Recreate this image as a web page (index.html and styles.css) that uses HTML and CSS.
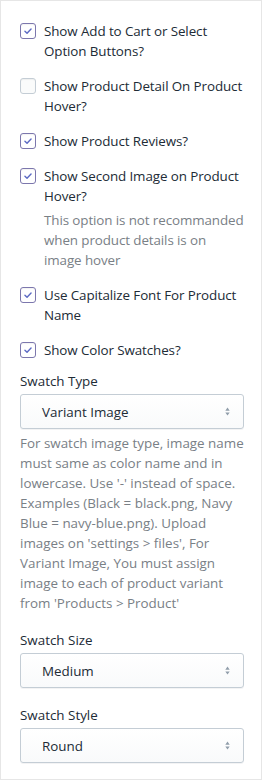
FILE: index.html
```html
<!DOCTYPE html>
<html lang="en">

<head>
  <meta charset="UTF-8">
  <meta name="viewport" content="width=device-width, initial-scale=1.0">
  <title>Product settings</title>
  <link rel="stylesheet" href="styles.css">
</head>

<body>

  <div class="panel">

    <label class="check">
      <span class="box checked"><svg viewBox="0 0 16 16"><path d="M4.5 8.2l2.4 2.4 4.6-4.8"/></svg></span>
      <span class="check-text">Show Add to Cart or Select Option Buttons?</span>
    </label>

    <label class="check">
      <span class="box"></span>
      <span class="check-text">Show Product Detail On Product Hover?</span>
    </label>

    <label class="check">
      <span class="box checked"><svg viewBox="0 0 16 16"><path d="M4.5 8.2l2.4 2.4 4.6-4.8"/></svg></span>
      <span class="check-text">Show Product Reviews?</span>
    </label>

    <label class="check">
      <span class="box checked"><svg viewBox="0 0 16 16"><path d="M4.5 8.2l2.4 2.4 4.6-4.8"/></svg></span>
      <span class="check-text">Show Second Image on Product Hover?
        <span class="help">This option is not recommanded when product details is on image hover</span>
      </span>
    </label>

    <label class="check">
      <span class="box checked"><svg viewBox="0 0 16 16"><path d="M4.5 8.2l2.4 2.4 4.6-4.8"/></svg></span>
      <span class="check-text">Use Capitalize Font For Product Name</span>
    </label>

    <label class="check">
      <span class="box checked"><svg viewBox="0 0 16 16"><path d="M4.5 8.2l2.4 2.4 4.6-4.8"/></svg></span>
      <span class="check-text">Show Color Swatches?</span>
    </label>

    <div class="field first">
      <div class="field-label">Swatch Type</div>
      <div class="select">
        <span>Variant Image</span>
        <svg class="arrows" viewBox="0 0 8 12"><path d="M4 1.5L6.5 5h-5zM4 10.5L1.5 7h5z"/></svg>
      </div>
      <p class="help">For swatch image type, image name must same as color name and in lowercase. Use '-' instead of space. Examples (Black = black.png, Navy Blue = navy-blue.png). Upload images on 'settings &gt; files', For Variant Image, You must assign image to each of product variant from 'Products &gt; Product'</p>
    </div>

    <div class="field">
      <div class="field-label">Swatch Size</div>
      <div class="select">
        <span>Medium</span>
        <svg class="arrows" viewBox="0 0 8 12"><path d="M4 1.5L6.5 5h-5zM4 10.5L1.5 7h5z"/></svg>
      </div>
    </div>

    <div class="field">
      <div class="field-label">Swatch Style</div>
      <div class="select">
        <span>Round</span>
        <svg class="arrows" viewBox="0 0 8 12"><path d="M4 1.5L6.5 5h-5zM4 10.5L1.5 7h5z"/></svg>
      </div>
    </div>

  </div>

</body>

</html>
```

FILE: styles.css
```css
body {
  margin: 0;
  background-color: #ffffff;
  font-family: "Open Sans", "Noto Sans", sans-serif;
  font-size: 13.4px;
  line-height: 20px;
  color: #212b36;
}

.panel {
  box-sizing: border-box;
  width: 262px;
  height: 780px;
  border: 1px solid #e6e6e6;
  padding: 20px 16px 0 19px;
  display: flex;
  flex-direction: column;
}

.check {
  display: flex;
  align-items: flex-start;
  gap: 8px;
  margin-bottom: 15px;
  letter-spacing: -0.1px;
}

.box {
  flex: none;
  box-sizing: border-box;
  width: 16px;
  height: 16px;
  margin-top: 2px;
  border: 1px solid #c4cdd5;
  border-radius: 3px;
  background-color: #fafbfb;
  box-shadow: inset 0 1px 1px rgba(0, 0, 0, 0.05);
}

.box.checked {
  border-color: #7c77ad;
  background-color: #ffffff;
}

.box svg {
  display: block;
  width: 14px;
  height: 14px;
  fill: none;
  stroke: #5c6ac4;
  stroke-width: 1.6;
  stroke-linecap: round;
  stroke-linejoin: round;
}

.check-text {
  flex: 1;
}

.help {
  display: block;
  margin: 4px 0 0;
  color: #798086;
}

.field.first {
  margin-top: -4px;
}

.field {
  margin-bottom: 17px;
}

.field-label {
  margin-bottom: 3px;
}

.select {
  box-sizing: border-box;
  height: 35px;
  width: 224px;
  display: flex;
  align-items: center;
  justify-content: space-between;
  padding: 0 12px 0 21px;
  border: 1px solid #c4cdd5;
  border-radius: 3px;
  background: linear-gradient(#ffffff, #f9fafb);
  box-shadow: 0 1px 0 rgba(22, 29, 37, 0.05);
}

.arrows {
  width: 7px;
  height: 11px;
  fill: #919eab;
}

.field .help {
  margin-top: 4px;
}
```
